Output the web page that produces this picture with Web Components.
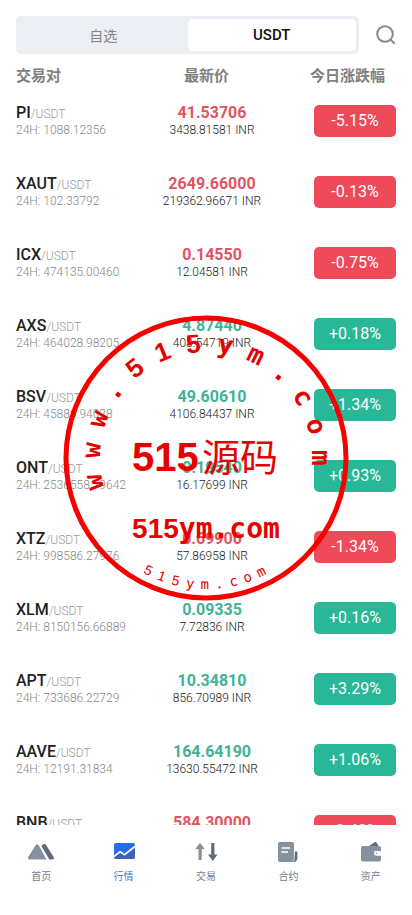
<!DOCTYPE html>
<html lang="zh-CN">
<head>
<meta charset="utf-8">
<meta name="viewport" content="width=device-width, initial-scale=1">
<title>行情</title>
<style>
body {
    margin: 0;
    background: #fff;
    font-family: Roboto, "Noto Sans CJK SC", sans-serif;
}
</style>
</head>
<body>

<market-app>
    <market-tabs slot="top"></market-tabs>
    <market-list></market-list>
    <tab-bar slot="bottom">
        <tab-item icon="home">首页</tab-item>
        <tab-item icon="market" active>行情</tab-item>
        <tab-item icon="trade">交易</tab-item>
        <tab-item icon="contract">合约</tab-item>
        <tab-item icon="assets">资产</tab-item>
    </tab-bar>
    <round-stamp slot="stamp"></round-stamp>
</market-app>

<script>
// small helper, every element here works the same way
function attach(el, html) {
    var template = document.createElement("template");
    template.innerHTML = html;
    el.attachShadow({mode: "open"}).appendChild(template.content.cloneNode(true));
}

// page shell
class MarketApp extends HTMLElement {
    constructor() {
        super();
        attach(this, `
<style>
:host {
    position: relative;
    display: flex;
    flex-direction: column;
    height: 100vh;
    overflow: hidden;
}
main {
    flex: 1;
    min-height: 0;
    overflow: hidden;
}
</style>
<slot name="top"></slot>
<main><slot></slot></main>
<slot name="bottom"></slot>
<slot name="stamp"></slot>
`);
    }
}
customElements.define("market-app", MarketApp);

// 自选 / USDT switch and the search button
class MarketTabs extends HTMLElement {
    constructor() {
        super();
        attach(this, `
<style>
:host {
    display: flex;
    align-items: center;
    gap: 17px;
    padding: 16px 16px 13px;
}
.switch {
    flex: 1;
    display: flex;
    box-sizing: border-box;
    height: 38px;
    padding: 3px;
    border-radius: 5px;
    background: #ebeef3;
}
button {
    padding: 0;
    border: none;
    background: none;
    font: inherit;
    cursor: pointer;
}
.switch button {
    flex: 1;
    border-radius: 5px;
    color: #848484;
    font-size: 14px;
}
.switch .on {
    background: #fff;
    color: #111;
    font-size: 15px;
    font-weight: 500;
}
.search {
    display: flex;
}
</style>
<div class="switch">
    <button>自选</button>
    <button class="on">USDT</button>
</div>
<button class="search" aria-label="搜索">
    <svg width="20" height="20" viewBox="0 0 20 20" fill="none" stroke="#888" stroke-width="2">
        <circle cx="9" cy="9" r="7.8"/>
        <path d="M14.3 14.3L18.7 18.7"/>
    </svg>
</button>
`);
    }
}
customElements.define("market-tabs", MarketTabs);

// one line of the list
class MarketRow extends HTMLElement {
    connectedCallback() {
        if (this.shadowRoot) return;
        var change = this.getAttribute("change");
        attach(this, `
<style>
:host {
    display: grid;
    grid-template-columns: minmax(0, 33fr) minmax(0, 32fr) minmax(0, 30fr);
    align-items: center;
    padding: 18px 16px;
    white-space: nowrap;
    --tone: #28b898;
    --price: #40b397;
}
:host([change^="-"]) {
    --tone: #ef4a5a;
    --price: #df5562;
}
.line {
    font-size: 16px;
    line-height: 20px;
    font-weight: 500;
    color: #222;
}
.line small {
    font-size: 12px;
    line-height: 12px;
    font-weight: 300;
    color: #999;
}
.sub {
    font-size: 12px;
    line-height: 15px;
    font-weight: 300;
    color: #888;
}
.middle {
    text-align: center;
}
.middle .line {
    font-weight: 700;
    color: var(--price);
}
.middle .sub {
    color: #222;
}
.change {
    justify-self: end;
    width: 82px;
    border-radius: 5px;
    background: var(--tone);
    color: #fff;
    font-size: 16px;
    line-height: 32px;
    text-align: center;
}
</style>
<div>
    <div class="line">${this.getAttribute("name")}<small>/USDT</small></div>
    <div class="sub">24H: ${this.getAttribute("volume")}</div>
</div>
<div class="middle">
    <div class="line">${this.getAttribute("price")}</div>
    <div class="sub">${this.getAttribute("inr")} INR</div>
</div>
<div class="change">${change}%</div>
`);
    }
}
customElements.define("market-row", MarketRow);

// name, 24h volume, price, price in INR, change
var coins = [
    ["PI", "1088.12356", "41.53706", "3438.81581", "-5.15"],
    ["XAUT", "102.33792", "2649.66000", "219362.96671", "-0.13"],
    ["ICX", "474135.00460", "0.14550", "12.04581", "-0.75"],
    ["AXS", "464028.98205", "4.87440", "403.54719", "+0.18"],
    ["BSV", "45889.94028", "49.60610", "4106.84437", "+1.34"],
    ["ONT", "2536558.79642", "0.19540", "16.17699", "+0.93"],
    ["XTZ", "998586.27976", "0.69900", "57.86958", "-1.34"],
    ["XLM", "8150156.66889", "0.09335", "7.72836", "+0.16"],
    ["APT", "733686.22729", "10.34810", "856.70989", "+3.29"],
    ["AAVE", "12191.31834", "164.64190", "13630.55472", "+1.06"],
    ["BNB", "25871.60318", "584.30000", "48373.61257", "-0.40"]
];

class MarketList extends HTMLElement {
    constructor() {
        super();
        attach(this, `
<style>
:host {
    display: block;
}
header {
    display: grid;
    grid-template-columns: repeat(3, 1fr);
    padding: 0 27px 0 16px;
    color: #808080;
    font-size: 15px;
    line-height: 18px;
    font-weight: 700;
}
header span:nth-child(2) {
    padding-left: 12px;
    text-align: center;
}
header span:nth-child(3) {
    text-align: right;
}
</style>
<header><span>交易对</span><span>最新价</span><span>今日涨跌幅</span></header>
${coins.map(c => `<market-row name="${c[0]}" volume="${c[1]}" price="${c[2]}" inr="${c[3]}" change="${c[4]}"></market-row>`).join("")}
`);
    }
}
customElements.define("market-list", MarketList);

// bottom navigation
class TabBar extends HTMLElement {
    constructor() {
        super();
        attach(this, `
<style>
:host {
    display: block;
    background: #fff;
}
nav {
    display: flex;
    padding: 14px 0 31px;
}
</style>
<nav><slot></slot></nav>
`);
    }
}
customElements.define("tab-bar", TabBar);

var icons = {
    home: `<path d="M1.8 20.5Q-1 20.5 .4 17.8L7.4 6.5Q9 4.2 10.8 6.5L18.6 20.5Z" fill="#84919e"/>
        <path d="M13.5 7.2Q14.8 4.2 17.6 5.3L25.6 18Q26.6 20.5 24 20.5H21.4Z" fill="#5f6b76"/>`,
    market: `<rect x="3" y="4" width="21" height="16" rx="2" fill="#246bf8"/>
        <path d="M3 18L9.5 12.8L13.5 15.2L24 7.5V18Q24 20 22 20H5Q3 20 3 18Z" fill="#3b62b8"/>
        <path d="M2.5 17.8L9 12.8L13.5 15.6L24.5 7" fill="none" stroke="#fff" stroke-width="1.7"/>`,
    trade: `<path d="M7 4L11.8 10H8.7V21H5.5V10H2.2Z" fill="#84919e"/>
        <path d="M18.2 4H21.4V15.5H24.5L19.8 22L15 15.5H18.2Z" fill="#5f6b76"/>`,
    contract: `<path d="M20 12.5H22.4V18.5Q22.4 23 18 23Z" fill="#5f6b76"/>
        <rect x="3" y="3" width="16" height="20" rx="2" fill="#84919e"/>
        <path d="M6.5 9H15M6.5 13H13" stroke="#fff" stroke-width="1.5"/>
        <path d="M19.4 12V18.5Q19.4 20 18.5 22" fill="none" stroke="#fff" stroke-width=".7"/>`,
    assets: `<path d="M11 7L17 3Q18 2.7 18.5 3.5L20.5 7Z" fill="#5f6b76"/>
        <path d="M5 7H21Q23 7 23 9V12H18Q16 12 16 14T18 16.4H23V20.5Q23 22.5 21 22.5H5Q3 22.5 3 20.5V9Q3 7 5 7Z" fill="#84919e"/>
        <path d="M23 12H18Q16 12 16 14.2T18 16.4H23V15.6H18.2Q16.9 15.6 16.9 14.2T18.2 12.8H23Z" fill="#fff"/>
        <path d="M23 12.8H18.2Q16.9 12.8 16.9 14.2T18.2 15.6H23Z" fill="#fff"/>
        <circle cx="18.6" cy="14.2" r=".8" fill="#84919e"/>`
};

class TabItem extends HTMLElement {
    connectedCallback() {
        if (this.shadowRoot) return;
        attach(this, `
<style>
:host {
    flex: 1;
}
a {
    display: flex;
    flex-direction: column;
    align-items: center;
    gap: 4px;
    color: #77818c;
    font-size: 10px;
    line-height: 15px;
    text-decoration: none;
}
:host([active]) a {
    color: #3b76e8;
}
</style>
<a href="#${this.getAttribute("icon")}">
    <svg width="26" height="26" viewBox="0 0 26 26">${icons[this.getAttribute("icon")]}</svg>
    <slot></slot>
</a>
`);
    }
}
customElements.define("tab-item", TabItem);

// gives x, y and rotate lists so that each letter stands on a circle.
// from and step are degrees clockwise from the top, half is half a letter's width
function ring(radius, from, step, count, half, inner) {
    var x = [], y = [], rotate = [];
    for (var i = 0; i < count; i++) {
        var deg = from + step * i;
        var a = deg * Math.PI / 180;
        var turn = inner ? deg - 180 : deg;
        var t = turn * Math.PI / 180;
        x.push((radius * Math.sin(a) - half * Math.cos(t)).toFixed(1));
        y.push((-radius * Math.cos(a) - half * Math.sin(t)).toFixed(1));
        rotate.push(turn.toFixed(1));
    }
    return `x="${x.join(" ")}" y="${y.join(" ")}" rotate="${rotate.join(" ")}"`;
}

// red stamp that lies over the list
class RoundStamp extends HTMLElement {
    constructor() {
        super();
        attach(this, `
<style>
:host {
    position: absolute;
    inset: 0;
    display: flex;
    align-items: center;
    justify-content: center;
    pointer-events: none;
}
svg {
    width: 286px;
    height: 286px;
}
text {
    font-family: "DejaVu Sans Mono", monospace;
    font-weight: 700;
    fill: #e60000;
}
.num {
    font-family: "Liberation Sans", sans-serif;
}
.han {
    font-family: "Noto Sans CJK SC", sans-serif;
}
.han, .thin {
    font-weight: 400;
}
</style>
<svg viewBox="-143 -143 286 286">
    <circle r="140" fill="none" stroke="#f80000" stroke-width="5"/>
    <text font-size="26" ${ring(106, -102, 16, 13, 8)}>www.<tspan class="num">515</tspan>ym.com</text>
    <text class="num" x="-74" y="13" font-size="40">515<tspan class="han" x="-4" font-size="38">源码</tspan></text>
    <text y="80" font-size="28" text-anchor="middle"><tspan class="num">515</tspan>ym.com</text>
    <text class="thin" font-size="14" ${ring(131, 207, -6.6, 9, 4.2, true)}><tspan class="num thin">515</tspan>ym.com</text>
</svg>
`);
    }
}
customElements.define("round-stamp", RoundStamp);
</script>
</body>
</html>
